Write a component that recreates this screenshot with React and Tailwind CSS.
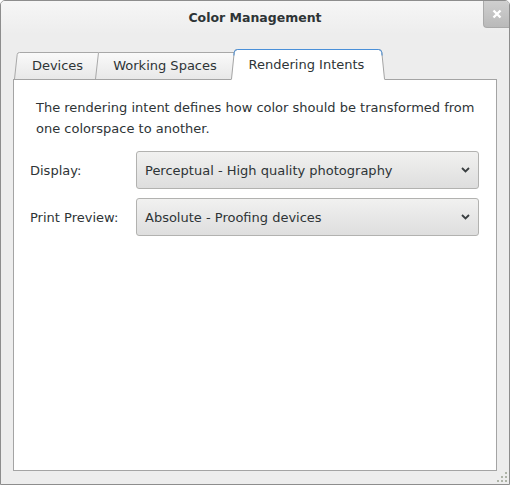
import React from "react";

function TabStrip() {
  return (
    <div className="relative h-[32px] -mb-px z-10">
      <svg className="absolute inset-0" width="484" height="32" viewBox="0 0 484 32">
        <defs>
          <linearGradient id="tabg" x1="0" y1="0" x2="0" y2="1">
            <stop offset="0" stopColor="#fafafa" />
            <stop offset="1" stopColor="#e8e8e8" />
          </linearGradient>
        </defs>
        <path d="M82.5,31 L85.5,4.5 L224,4.5 L221,31 Z" fill="url(#tabg)" />
        <path d="M85.5,4.5 L224,4.5" stroke="#a8a8a8" strokeWidth="1" fill="none" />
        <path d="M1.5,31 L4.2,6.5 Q4.5,4.5 6.5,4.5 L85.5,4.5 L82.5,31 Z" fill="url(#tabg)" />
        <path d="M1.5,31 L4.2,6.5 Q4.5,4.5 6.5,4.5 L85.5,4.5 L82.5,31" stroke="#a8a8a8" strokeWidth="1" fill="none" />
        <path d="M218.5,32 L221.2,4.5 Q221.5,1.5 224.5,1.5 L365.5,1.5 Q368.5,1.5 368.8,4.5 L371.5,32 Z" fill="#ffffff" />
        <path d="M218.5,31 L221.2,4.5 Q221.5,1.5 224.5,1.5 L365.5,1.5 Q368.5,1.5 368.8,4.5 L371.5,31" stroke="#a4a4a4" strokeWidth="1" fill="none" />
        <path d="M220.9,7.5 L221.2,4.5 Q221.5,1.5 224.5,1.5 L365.5,1.5 Q368.5,1.5 368.8,4.5 L369.1,7.5" stroke="#4a90d9" strokeWidth="1" fill="none" />
        <rect x="219" y="31" width="152" height="1" fill="#ffffff" />
      </svg>
      <div className="relative flex h-full">
        <div className="w-[89px] flex justify-center pt-[10px] leading-[15px]">Devices</div>
        <div className="w-[126px] flex justify-center pt-[10px] leading-[15px]">Working Spaces</div>
        <div className="w-[157px] flex justify-center pt-[9px] leading-[15px]">Rendering Intents</div>
      </div>
    </div>
  );
}

function Combo({ value }) {
  return (
    <div className="h-[38px] flex items-center justify-between rounded-[3px] border border-[#b2b2b0] bg-gradient-to-b from-[#f1f1f0] to-[#dedede] pl-[8px] pr-[8px]">
      <span className="leading-[15px] pt-px">{value}</span>
      <svg width="9" height="6" viewBox="0 0 9 6">
        <path d="M1,1 L4.5,4.5 L8,1" stroke="#3a3f41" strokeWidth="1.8" fill="none" />
      </svg>
    </div>
  );
}

export default function App() {
  return (
    <div className="w-[510px] h-[485px] relative flex flex-col bg-[#ededed] border border-[#8d8d8d] rounded-t-[5px] overflow-hidden font-['DejaVu_Sans',sans-serif] text-[13px] text-[#2e3436]">
      <div className="relative h-[33px] flex items-center justify-center bg-gradient-to-b from-[#f6f6f6] to-[#ededed]">
        <span className="font-bold text-[12.5px] leading-[15px]">Color Management</span>
        <div className="absolute right-0 top-0 w-[26px] h-[27px] flex items-center justify-center rounded-bl-[4px] border-l border-b border-[#a9a9a9] bg-gradient-to-b from-[#cfcfcf] to-[#b9b9b9]">
          <svg width="10" height="10" viewBox="0 0 10 10">
            <path d="M1.5,1.5 L8.5,8.5 M8.5,1.5 L1.5,8.5" stroke="#ffffff" strokeWidth="2.4" />
          </svg>
        </div>
      </div>
      <div className="flex-1 flex flex-col px-[12px] pt-[14px] pb-[13px]">
        <TabStrip />
        <div className="flex-1 bg-white border border-[#a4a4a4] pl-[16px] pr-[17px] pt-[17px]">
          <p className="ml-[6px] leading-[21px]">
            The rendering intent defines how color should be transformed from one colorspace to another.
          </p>
          <div className="mt-[12px] grid grid-cols-[106px_1fr] gap-y-[9px] items-center">
            <span className="leading-[15px] pt-px">Display:</span>
            <Combo value="Perceptual - High quality photography" />
            <span className="leading-[15px] pt-px">Print Preview:</span>
            <Combo value="Absolute - Proofing devices" />
          </div>
        </div>
      </div>
      <div className="absolute right-[2px] bottom-[2px] flex flex-col items-end gap-[2px]">
        <div className="flex gap-[2px]">
          <span className="w-[2px] h-[2px] bg-[#aeb4a8]" />
        </div>
        <div className="flex gap-[2px]">
          <span className="w-[2px] h-[2px] bg-[#aeb4a8]" />
          <span className="w-[2px] h-[2px] bg-[#aeb4a8]" />
        </div>
        <div className="flex gap-[2px]">
          <span className="w-[2px] h-[2px] bg-[#aeb4a8]" />
          <span className="w-[2px] h-[2px] bg-[#aeb4a8]" />
          <span className="w-[2px] h-[2px] bg-[#aeb4a8]" />
        </div>
      </div>
    </div>
  );
}
